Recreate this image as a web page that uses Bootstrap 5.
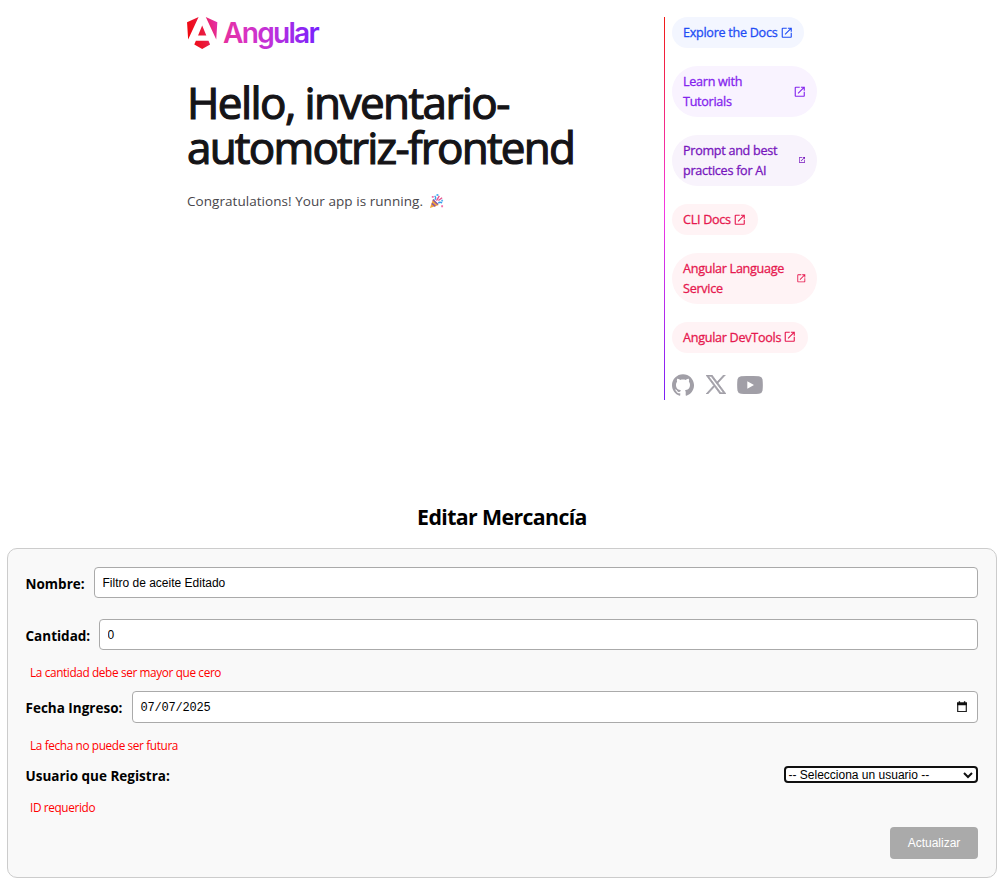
<!DOCTYPE html>
<html lang="es">
<head>
<meta charset="utf-8">
<meta name="viewport" content="width=device-width, initial-scale=1">
<title>InventarioAutomotrizFrontend</title>
<link href="https://cdn.jsdelivr.net/npm/bootstrap@5.3.0/dist/css/bootstrap.min.css" rel="stylesheet">
<style>
body{font-family:"Open Sans","Noto Sans",sans-serif;color:#000;background:#fff;font-size:14px;line-height:1.2;overflow:hidden}
.hero{width:630px;margin:0 0 0 187px;padding-top:17px}
.brand-logo{display:block;width:134px;height:33px}
.hero-title{font-size:44px;line-height:45px;font-weight:500;letter-spacing:-1.78px;color:#151417;margin:30px 0 0;white-space:nowrap;-webkit-text-stroke:1.2px #151417}
.hero-title span{display:block}
.hero-title span:first-child{letter-spacing:-1.58px}
.hero-copy{font-size:13.5px;line-height:20px;letter-spacing:.05px;color:#48464b;margin:21px 0 0}
.party{width:15px;height:15px;vertical-align:-3px;margin-left:2px}
.rule{width:1px;height:383px;background:linear-gradient(180deg,#f11a14,#f637e3 50%,#7a1ff5);margin-right:7px}
.side{width:145px}
.pills{gap:18.4px}
.pill{border-radius:26px;padding:5.3px 11px;font-size:12.6px;line-height:20px;font-weight:500;text-decoration:none;letter-spacing:-.28px;-webkit-text-stroke:.3px currentColor}
.pill span{padding-top:1px;margin-bottom:-1px}
.pill svg{flex:none;width:13.5px;height:13.5px;fill:currentColor;margin-left:2.2px}
.pill .ic-s{width:8px;height:8px}.pill .ic-m{width:10.6px;height:10.6px;margin-right:-1px}
.p-blue{color:#1f4df5;background:#f3f6ff}
.p-violet{color:#8424ee;background:#f9f3ff}
.p-purple{color:#7716bd;background:#f8f3fc}
.p-red{color:#e6194f;background:#fff3f5}
.social{margin-top:21px;height:22px;fill:#a19fa7;gap:12px}
.form-title{font-size:21.3px;line-height:28px;font-weight:700;margin:103px 0 0 2px;letter-spacing:-.62px}
.panel{margin:17px 5px 0 7px;height:330px;padding:18px;background:#f9f9f9;border:1px solid #ccc;border-radius:10px}
.lbl{font-weight:700;font-size:13.5px;line-height:18px;white-space:nowrap;padding-top:3px;margin-left:-.5px;margin-right:.5px}
.field{border:1px solid #aaa;border-radius:4px;background:#fff;height:31px;padding:0 8px 0 7.5px;font-family:"Liberation Sans",sans-serif;font-size:12px;line-height:29px;color:#000}
.field.date{height:32px;font-family:"Liberation Mono",monospace;font-size:12px;letter-spacing:-.2px;padding-right:9px}
.date span{padding-top:2px}
.err{color:#f00;font-size:11.8px;line-height:14px;padding-bottom:2px;padding-left:4px;letter-spacing:-.37px}
.user-select{width:194px;height:17px;border:2px solid #101010;border-radius:4px;background:#fff;font:12px/13px "Liberation Sans",sans-serif;padding:1px 3px 0 2.5px}
.send{width:88px;height:32px;border:0;border-radius:4px;background:#aaa;color:#fff;font:12px "Liberation Sans",sans-serif}
</style>
</head>
<body>
<svg width="0" height="0" class="position-absolute"><defs>
<symbol id="open" viewBox="0 -960 960 960"><path d="M200-120q-33 0-56.5-23.5T120-200v-560q0-33 23.5-56.5T200-840h280v80H200v560h560v-280h80v280q0 33-23.5 56.5T760-120H200Zm188-212-56-56 372-372H560v-80h280v280h-80v-144L388-332Z"/></symbol>
</defs></svg>
<main class="hero d-flex justify-content-between">
  <div>
    <svg class="brand-logo" viewBox="0 0 982 242">
      <defs>
        <linearGradient id="shield" x1="0" y1="120" x2="225" y2="60" gradientUnits="userSpaceOnUse"><stop offset="0" stop-color="#f0060b"/><stop offset=".5" stop-color="#ea1b3f"/><stop offset="1" stop-color="#e530ae"/></linearGradient>
        <linearGradient id="word" x1="273" y1="150" x2="975" y2="110" gradientUnits="userSpaceOnUse"><stop offset="0" stop-color="#e52f9f"/><stop offset=".2" stop-color="#db33bf"/><stop offset=".5" stop-color="#bd31dc"/><stop offset="1" stop-color="#7420ff"/></linearGradient>
      </defs>
      <path fill="url(#shield)" d="M222.077 39.192l-8.019 125.923L137.387 0l84.69 39.192zm-53.105 162.825l-57.933 33.056-57.934-33.056 11.783-28.556h92.301l11.783 28.556zM111.039 62.675l30.357 73.803H80.681l30.358-73.803zM7.937 165.115L0 39.192 84.69 0 7.937 165.115z"/>
      <text x="264" y="187" font-family="Inter" font-weight="600" font-size="206" textLength="708" fill="url(#word)">Angular</text>
    </svg>
    <h1 class="hero-title"><span>Hello, inventario-</span><span>automotriz-frontend</span></h1>
    <p class="hero-copy">Congratulations! Your app is running.
      <svg class="party" viewBox="0 0 16 16"><path d="M1 15 4.2 5.5 10.5 11.6z" fill="#f2a33a"/><path d="m3 10 3.8 3.2M4.2 6l5.3 5.2" stroke="#8a55a5" stroke-width="1.5"/><path d="M6 6c2-1 1-3 0-4M10 10c1-2 3-1 4-.5" fill="none" stroke="#3b9ee8" stroke-width="1.5"/><path d="m8 7 3-5M10 7l4-3" stroke="#e5518f" stroke-width="1.4"/><path d="M3 2h2v2H3zM13 12h2v2h-2z" fill="#f072aa"/><path d="M13 6h2v2h-2zM8 0h2v2H8z" fill="#55b6f2"/></svg></p>
  </div>
  <div class="d-flex">
    <div class="rule"></div>
    <div class="side">
      <div class="pills d-flex flex-column align-items-start">
        <a class="pill p-blue d-flex align-items-center" href="#"><span>Explore the Docs</span><svg><use href="#open"/></svg></a>
        <a class="pill p-violet d-flex align-items-center justify-content-between w-100" href="#"><span>Learn with<br>Tutorials</span><svg><use href="#open"/></svg></a>
        <a class="pill p-purple d-flex align-items-center justify-content-between w-100" href="#"><span>Prompt and best<br>practices for AI</span><svg class="ic-s"><use href="#open"/></svg></a>
        <a class="pill p-red d-flex align-items-center" href="#"><span>CLI Docs</span><svg><use href="#open"/></svg></a>
        <a class="pill p-red d-flex align-items-center justify-content-between w-100" href="#"><span>Angular Language<br>Service</span><svg class="ic-m"><use href="#open"/></svg></a>
        <a class="pill p-red d-flex align-items-center" href="#"><span>Angular DevTools</span><svg><use href="#open"/></svg></a>
      </div>
      <div class="social d-flex align-items-center">
        <svg width="22" height="22" viewBox="0 0 24.6 24"><path d="M12.3047 0C5.50634 0 0 5.50942 0 12.3047C0 17.7423 3.52529 22.3535 8.41332 23.9787C9.02856 24.0946 9.25414 23.7142 9.25414 23.3871C9.25414 23.0949 9.24389 22.3207 9.23876 21.2953C5.81601 22.0377 5.09414 19.6444 5.09414 19.6444C4.53427 18.2243 3.72524 17.8449 3.72524 17.8449C2.61064 17.082 3.81137 17.0973 3.81137 17.0973C5.04697 17.1835 5.69604 18.3647 5.69604 18.3647C6.79321 20.2463 8.57636 19.7029 9.27978 19.3881C9.39052 18.5924 9.70736 18.0499 10.0591 17.7423C7.32641 17.4347 4.45429 16.3765 4.45429 11.6618C4.45429 10.3185 4.9311 9.22133 5.72065 8.36C5.58222 8.04931 5.16694 6.79833 5.82831 5.10337C5.82831 5.10337 6.85883 4.77319 9.2121 6.36459C10.1965 6.09082 11.2424 5.95546 12.2883 5.94931C13.3342 5.95546 14.3801 6.09082 15.3644 6.36459C17.7023 4.77319 18.7328 5.10337 18.7328 5.10337C19.3942 6.79833 18.9789 8.04931 18.8559 8.36C19.6403 9.22133 20.1171 10.3185 20.1171 11.6618C20.1171 16.3888 17.2409 17.4296 14.5031 17.7321C14.9338 18.1012 15.3337 18.8559 15.3337 20.0084C15.3337 21.6552 15.3183 22.978 15.3183 23.3779C15.3183 23.7009 15.5336 24.0854 16.1642 23.9623C21.0871 22.3484 24.6094 17.7341 24.6094 12.3047C24.6094 5.50942 19.0999 0 12.3047 0Z"/></svg>
        <svg width="20" height="19" viewBox="0 0 24 24" preserveAspectRatio="none"><path stroke="#a19fa7" stroke-width="1" d="M14.2833 10.1624L23.2178 0H21.1006L13.3427 8.82379L7.14656 0H0L9.36984 13.3432L0 24H2.11732L10.3098 14.6817L16.8534 24H24L14.2833 10.1624ZM11.3833 13.4608L10.4339 12.1321L2.88022 1.5593H6.13231L12.2284 10.0925L13.1778 11.4212L21.1016 22.5127H17.8495L11.3833 13.4608Z"/></svg>
        <svg width="26" height="18" viewBox="0 0 26 18" style="margin-left:-1px"><path fill-rule="evenodd" d="M4 .3Q13-.4 22 .3Q25 .6 25.5 3.3Q26.2 9 25.5 14.7Q25 17.4 22 17.7Q13 18.4 4 17.7Q1 17.4.5 14.7Q-.2 9 .5 3.3Q1 .6 4 .3ZM10.3 5.2V12.8L17 9Z"/></svg>
      </div>
    </div>
  </div>
</main>
<h2 class="form-title text-center">Editar Mercancía</h2>
<form class="panel d-flex flex-column">
  <div class="d-flex align-items-center"><label class="lbl" style="width:68px">Nombre:</label><input class="field flex-fill" value="Filtro de aceite Editado"></div>
  <div class="d-flex align-items-center" style="margin-top:21px"><label class="lbl" style="width:73px">Cantidad:</label><input class="field flex-fill" value="0"></div>
  <div class="err" style="margin-top:15px">La cantidad debe ser mayor que cero</div>
  <div class="d-flex align-items-center" style="margin-top:10px"><label class="lbl" style="width:106px;padding-top:2px">Fecha Ingreso:</label>
    <div class="field date flex-fill d-flex align-items-center justify-content-between"><span>07/07/2025</span><svg width="12" height="12" viewBox="0 0 12 12"><path d="M1.7 2.2h8.6v8.3H1.7z" fill="none" stroke="#222" stroke-width="1.2"/><path d="M1 1.5h10v2.7H1zM2.7.3h1.4v2H2.7zM7.9.3h1.4v2H7.9z" fill="#111"/></svg></div></div>
  <div class="err" style="margin-top:15px">La fecha no puede ser futura</div>
  <div class="d-flex align-items-center justify-content-between" style="margin-top:10px"><label class="lbl">Usuario que Registra:</label>
    <div class="user-select d-flex align-items-center justify-content-between" tabindex="0"><span>-- Selecciona un usuario --</span><svg width="10" height="8" viewBox="0 0 10 8"><path d="m1 2 4 4 4-4" fill="none" stroke="#111" stroke-width="2"/></svg></div></div>
  <div class="err" style="margin-top:15px">ID requerido</div>
  <button type="button" class="send align-self-end" style="margin-top:11px">Actualizar</button>
</form>
<script src="https://cdn.jsdelivr.net/npm/bootstrap@5.3.0/dist/js/bootstrap.bundle.min.js"></script>
</body>
</html>
